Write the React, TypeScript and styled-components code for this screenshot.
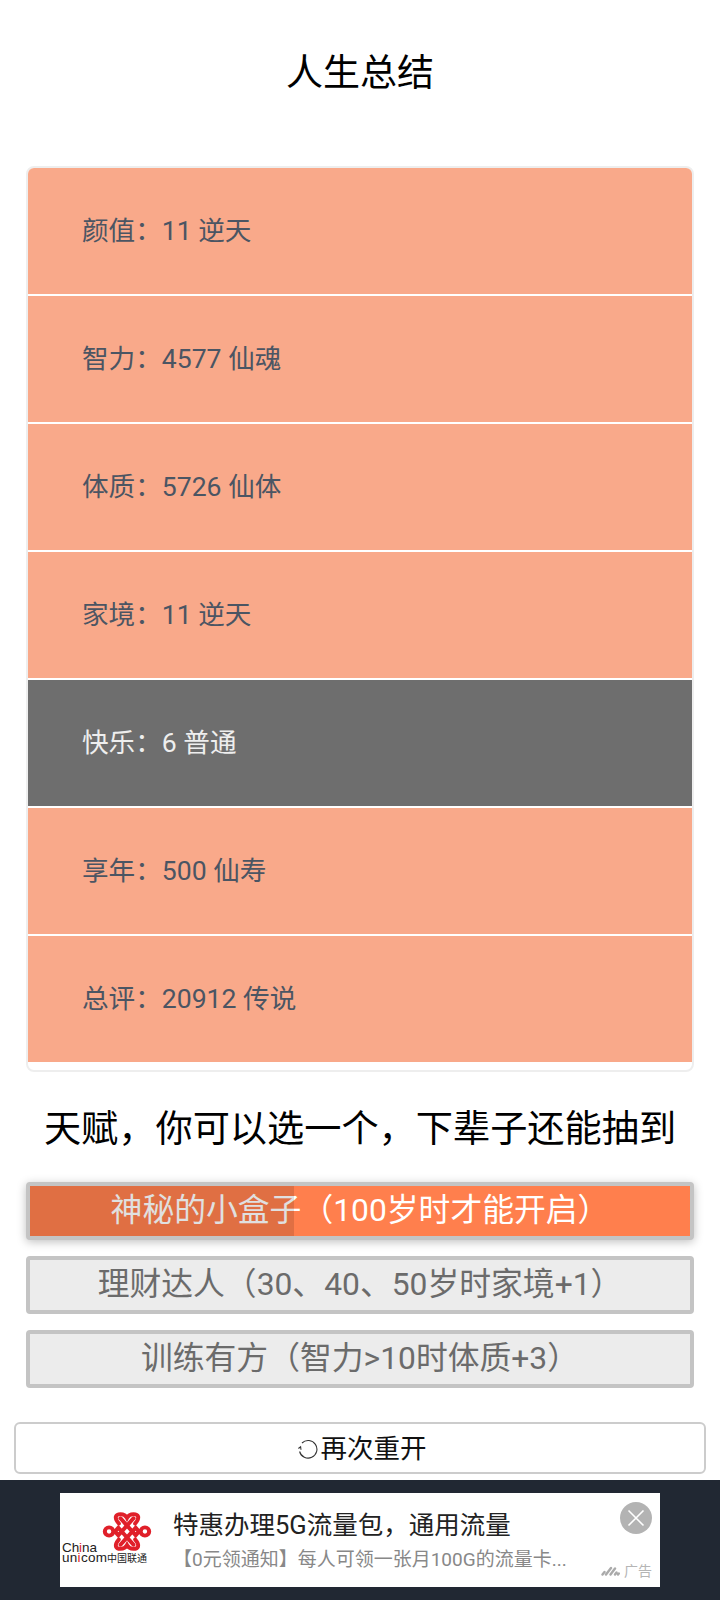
import styled, { createGlobalStyle } from 'styled-components'

const FONT = `Roboto, 'Noto Sans CJK SC', sans-serif`

const GlobalStyle = createGlobalStyle`
  html, body {
    margin: 0;
    padding: 0;
    background: #fff;
    font-family: ${FONT};
  }
`

const summary = [
  { label: '颜值：11 逆天' },
  { label: '智力：4577 仙魂' },
  { label: '体质：5726 仙体' },
  { label: '家境：11 逆天' },
  { label: '快乐：6 普通', plain: true },
  { label: '享年：500 仙寿' },
  { label: '总评：20912 传说' },
]

const talents = [
  { label: '神秘的小盒子（100岁时才能开启）', picked: true },
  { label: '理财达人（30、40、50岁时家境+1）' },
  { label: '训练有方（智力>10时体质+3）' },
]

// logo is a drawing: knot plus the brand lettering, placed in the svg
const UnicomLogo = () => (
  <LogoSvg viewBox="0 0 94 94">
    <g
      transform="translate(42 19) scale(1.087 1.054)"
      fill="none"
      stroke="#e0202a"
      strokeWidth="3.7"
      strokeLinecap="round"
    >
      <path d="M15.5 11 C10.5 5 13 2 17 2 C20 2 22 3.5 23 5.5 C24 3.5 26 2 29 2 C33 2 35.5 5 30.5 11" />
      <path d="M15.5 26 C10.5 32 13 35 17 35 C20 35 22 33.5 23 31.5 C24 33.5 26 35 29 35 C33 35 35.5 32 30.5 26" />
      <path d="M17 6 L31 22 L34 18.5" />
      <path d="M29 6 L15 22 L12 18.5" />
      <path d="M17 31 L31 15 L34 18.5" />
      <path d="M29 31 L15 15 L12 18.5" />
      <circle cx="6.5" cy="18.5" r="3.9" />
      <circle cx="39.5" cy="18.5" r="3.9" />
    </g>
    <BrandText x="2" y="59" textLength="35">
      Ch<tspan fill="#e0202a">i</tspan>na
    </BrandText>
    <BrandText x="2" y="69" textLength="45">
      un<tspan fill="#e0202a">i</tspan>com
    </BrandText>
    <BrandCn x="47" y="69" textLength="40">
      中国联通
    </BrandCn>
  </LogoSvg>
)

const App = () => {
  return (
    <Page>
      <GlobalStyle />
      <Title>人生总结</Title>
      <SummaryList>
        {summary.map((row) => (
          <SummaryRow key={row.label} $plain={row.plain}>
            {row.label}
          </SummaryRow>
        ))}
      </SummaryList>
      <Heading>天赋，你可以选一个，下辈子还能抽到</Heading>
      <TalentList>
        {talents.map((talent) => (
          <TalentButton key={talent.label} $picked={talent.picked}>
            {talent.label}
            {talent.picked && <Progress style={{ width: '40%' }} />}
          </TalentButton>
        ))}
      </TalentList>
      <RestartButton>
        <RestartIcon viewBox="0 0 20 20">
          <path
            d="M4 4 A8.8 8.8 0 1 1 1.6 12.5 M0.4 9.5 L2.6 7.8 L3 10.8"
            fill="none"
            stroke="#333"
            strokeWidth="1.1"
          />
        </RestartIcon>
        再次重开
      </RestartButton>
      <AdBar>
        <AdCard>
          <UnicomLogo />
          <AdText>
            <AdTitle>特惠办理5G流量包，通用流量</AdTitle>
            <AdDesc>【0元领通知】每人可领一张月100G的流量卡...</AdDesc>
          </AdText>
          <CloseButton>
            <svg width="18" height="18" viewBox="0 0 18 18">
              <path d="M1.5 1.5 L16.5 16.5 M16.5 1.5 L1.5 16.5" stroke="#fff" strokeWidth="1.6" />
            </svg>
          </CloseButton>
          <AdMark>
            <svg width="19" height="10" viewBox="0 0 19 10">
              <path
                d="M1.5 8.5 L3.5 6 M5 8.5 L10 2 M9.5 8.5 L14 2.5 M14 8.5 L15.5 6.5 M17 8.5 L17.8 7.5"
                stroke="#aaa"
                strokeWidth="2.4"
                strokeLinecap="round"
              />
            </svg>
            广告
          </AdMark>
        </AdCard>
      </AdBar>
    </Page>
  )
}

export default App

const Page = styled.div`
  display: flex;
  flex-direction: column;
  width: 720px;
  height: 1600px;
  overflow: hidden;
`

const Title = styled.div`
  height: 146px;
  padding-bottom: 6px;
  box-sizing: border-box;
  margin-bottom: 20px;
  display: flex;
  align-items: center;
  justify-content: center;
  font-size: 37px;
  color: #000;
`

const SummaryList = styled.div`
  margin: 0 26px;
  box-sizing: border-box;
  height: 906px;
  padding-bottom: 8px;
  border: 2px solid #eee;
  border-radius: 8px;
  overflow: hidden;
  display: flex;
  flex-direction: column;
  gap: 2px;
`

const SummaryRow = styled.div<{ $plain?: boolean }>`
  height: 126px;
  box-sizing: border-box;
  flex: none;
  display: flex;
  align-items: center;
  padding: 0 0 6px 54px;
  font-size: 26.6px;
  color: ${(p) => (p.$plain ? '#eee' : '#4b5563')};
  background: ${(p) => (p.$plain ? '#6e6e6e' : '#f9a98a')};
`

const Heading = styled.div`
  height: 110px;
  box-sizing: border-box;
  padding-bottom: 2px;
  display: flex;
  align-items: center;
  justify-content: center;
  font-size: 37.2px;
  color: #000;
`

const TalentList = styled.div`
  display: flex;
  flex-direction: column;
  gap: 16.5px;
  margin: 0 26px;
`

const TalentButton = styled.div<{ $picked?: boolean }>`
  position: relative;
  box-sizing: border-box;
  height: 57.5px;
  padding-bottom: 7px;
  display: flex;
  align-items: center;
  justify-content: center;
  border: 4px solid #c4c4c4;
  border-radius: 4px;
  font-size: 31.8px;
  color: ${(p) => (p.$picked ? '#fff' : '#6b6b6b')};
  background: ${(p) => (p.$picked ? '#ff7f4d' : '#ececec')};
  box-shadow: ${(p) => (p.$picked ? '0 2px 10px rgba(0, 0, 0, 0.25)' : 'none')};
`

const Progress = styled.div`
  position: absolute;
  left: 0;
  top: 0;
  bottom: 0;
  background: rgba(0, 0, 0, 0.12);
`

const RestartButton = styled.div`
  box-sizing: border-box;
  margin: 34px 14px 0;
  height: 52px;
  padding: 0 0 2px 4px;
  display: flex;
  align-items: center;
  justify-content: center;
  gap: 3px;
  border: 2px solid #ccc;
  border-radius: 6px;
  font-size: 26.5px;
  color: #111;
`

const RestartIcon = styled.svg`
  width: 20px;
  height: 20px;
  margin-top: 4px;
`

const AdBar = styled.div`
  margin-top: 6px;
  flex: 1;
  background: #212833;
  padding: 13px 60px;
`

const AdCard = styled.div`
  position: relative;
  display: flex;
  height: 94px;
  background: #fff;
`

const LogoSvg = styled.svg`
  width: 94px;
  height: 94px;
  flex: none;
`

const BrandText = styled.text`
  font-family: 'Liberation Sans', sans-serif;
  font-size: 13.5px;
  fill: #222;
`

const BrandCn = styled.text`
  font-family: ${FONT};
  font-size: 10px;
  fill: #222;
`

const AdText = styled.div`
  padding: 14px 0 0 19px;
  display: flex;
  flex-direction: column;
  gap: 3px;
`

const AdTitle = styled.div`
  font-size: 25.5px;
  line-height: 36px;
  color: #222;
`

const AdDesc = styled.div`
  font-size: 19px;
  line-height: 28px;
  color: #888;
`

const CloseButton = styled.div`
  position: absolute;
  right: 8px;
  top: 9px;
  width: 32px;
  height: 32px;
  border-radius: 50%;
  background: #b3b3b3;
  display: flex;
  align-items: center;
  justify-content: center;
`

const AdMark = styled.div`
  position: absolute;
  right: 8px;
  bottom: 8px;
  display: flex;
  align-items: center;
  gap: 4px;
  font-size: 14px;
  line-height: 16px;
  color: #b5b5b5;
`
